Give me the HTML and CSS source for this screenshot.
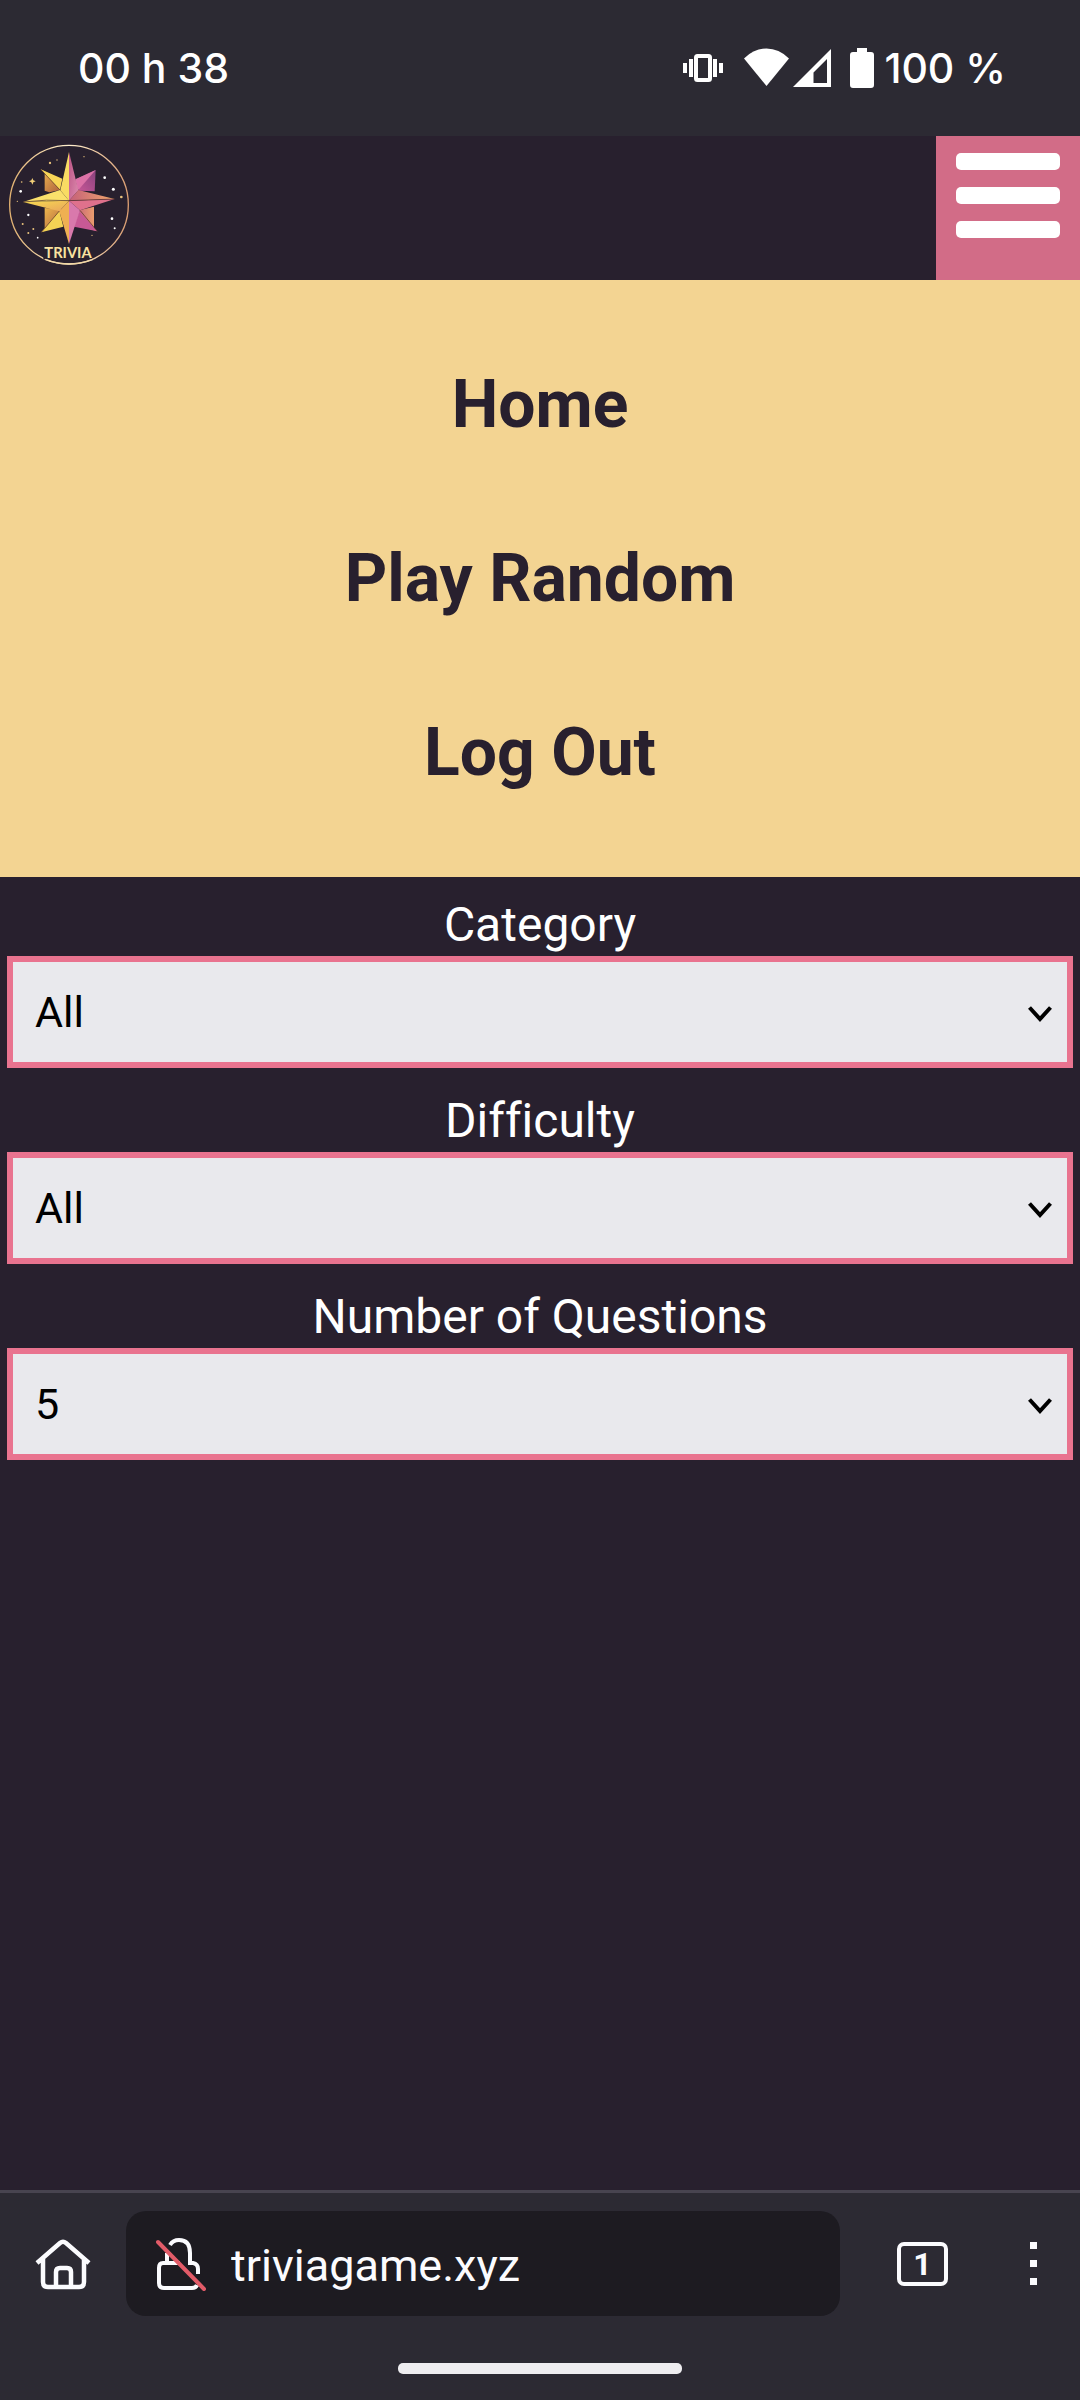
FILE: index.html
```html
<!DOCTYPE html>
<html lang="en">
<head>
<meta charset="utf-8">
<meta name="viewport" content="width=device-width, initial-scale=1">
<title>Trivia</title>
<link rel="stylesheet" href="styles.css">
</head>
<body>
<div class="status">
  <span class="status-text">00 h 38</span>
  <div class="status-icons">
    <svg class="vibrate" width="42" height="40" viewBox="0 0 42 40" fill="#fff" aria-hidden="true">
      <rect x="1" y="15" width="4" height="10"/><rect x="7" y="11" width="4" height="18"/>
      <rect x="31" y="11" width="4" height="18"/><rect x="37" y="15" width="4" height="10"/>
      <rect x="14" y="8" width="14" height="24" rx="1.500" fill="none" stroke="#fff" stroke-width="4"/>
    </svg>
    <svg class="wifi" width="46" height="40" viewBox="0 0 46 40" fill="#fff" aria-hidden="true"><path d="M0 10.500Q10 0.500 22.500 0.500T45 10.500L22.500 38Z"/></svg>
    <svg class="signal" width="38" height="40" viewBox="0 0 38 40" fill="#fff" fill-rule="evenodd" aria-hidden="true"><path d="M0 39L38 1V39ZM20.500 24.500V35H34V11Z"/></svg>
    <svg class="battery" width="24" height="40" viewBox="0 0 24 40" fill="#fff" aria-hidden="true"><path d="M7 0H17V4H21Q24 4 24 7V37Q24 40 21 40H3Q0 40 0 37V7Q0 4 3 4H7Z"/></svg>
    <span class="status-text">100 %</span>
  </div>
</div>

<header class="header">
  <a class="logo" href="#" aria-label="Trivia home">
    <svg width="144" height="144" viewBox="0 18 432 432">
      <defs>
        <linearGradient id="ring" x1="0" y1="0" x2="1" y2="0"><stop offset="0" stop-color="#e0b070"/><stop offset=".5" stop-color="#fff0cf"/><stop offset="1" stop-color="#d99c70"/></linearGradient>
        <linearGradient id="gold" x1="0" y1="0" x2="1" y2="1"><stop offset="0" stop-color="#f8dc50"/><stop offset="1" stop-color="#e8a45c"/></linearGradient>
        <linearGradient id="deep" x1="0" y1="0" x2="1" y2="1"><stop offset="0" stop-color="#f3be4e"/><stop offset="1" stop-color="#ad603f"/></linearGradient>
        <linearGradient id="rose" x1="0" y1="0" x2="1" y2="1"><stop offset="0" stop-color="#bb5385"/><stop offset="1" stop-color="#dd8cae"/></linearGradient>
        <linearGradient id="plum" x1="1" y1="0" x2="0" y2="1"><stop offset="0" stop-color="#87427d"/><stop offset="1" stop-color="#ca5797"/></linearGradient>
        <linearGradient id="peach" x1="0" y1="0" x2="1" y2="0"><stop offset="0" stop-color="#c45f79"/><stop offset="1" stop-color="#f2a86b"/></linearGradient>
      </defs>
      <circle cx="207" cy="224" r="178" fill="none" stroke="url(#ring)" stroke-width="4"/>
      <path d="M122 118L180 148V180L148 187L134 182V128Z" fill="url(#deep)"/>
      <path d="M122 118L187 146L180 180Z" fill="#f8d657"/>
      <path d="M134 234L184 238L176 282L124 307L134 294Z" fill="url(#deep)"/>
      <path d="M124 307L178 243L190 290Z" fill="#f4d354"/>
      <path d="M287 120L228 148L238 182L284 184Z" fill="url(#plum)"/>
      <path d="M287 120L226 148L233 182Z" fill="#dc72a7"/>
      <path d="M240 240L282 230V294L292 304L225 285Z" fill="url(#peach)"/>
      <path d="M292 304L238 243L222 290Z" fill="#c85995"/>
      <path d="M207 66L181 181L207 212Z" fill="#f8dc63"/>
      <path d="M207 66L235 181L207 212Z" fill="url(#rose)"/>
      <path d="M69 216L180 180L207 212Z" fill="#fae06b"/>
      <path d="M69 216L207 212L178 244Z" fill="url(#gold)"/>
      <path d="M344 207L235 180L207 212Z" fill="url(#peach)"/>
      <path d="M344 207L207 212L240 241Z" fill="#df718c"/>
      <path d="M207 342L178 244L207 212Z" fill="#efb052"/>
      <path d="M207 342L240 241L207 212Z" fill="#d979ac"/>
      <path d="M122 118L180 180M124 307L178 243M69 216Q140 207 207 212L344 207M240 241L292 304" fill="none" stroke="#4a2b25" stroke-width="2"/>
      <path d="M97 144L100 151L107 154L100 157L97 164L94 157L87 154L94 151Z" fill="#f2cf78"/>
      <g fill="#e9c27c"><circle cx="150" cy="99" r="3.500"/><circle cx="65" cy="156" r="2.500"/><circle cx="171" cy="90" r="2"/><circle cx="252" cy="80" r="2"/><circle cx="364" cy="201" r="4"/><circle cx="68" cy="282" r="3"/><circle cx="100" cy="297" r="3"/><circle cx="85" cy="309" r="3"/><circle cx="52" cy="214" r="2"/><circle cx="276" cy="316" r="2"/></g>
      <g fill="#fff"><circle cx="62" cy="184" r="4"/><circle cx="85" cy="255" r="3.500"/><circle cx="113" cy="323" r="2.500"/><circle cx="314" cy="143" r="4"/><circle cx="340" cy="178" r="4.500"/><circle cx="336" cy="266" r="4"/><circle cx="344" cy="295" r="3"/></g>
      <path d="M130 347H276V388H130Z" fill="#28202e"/>
      <text class="logo-text" x="204" y="384" text-anchor="middle">TRIVIA</text>
      <path d="M135 388Q207 416 279 388" fill="none" stroke="#f3d8a4" stroke-width="4"/>
    </svg>
  </a>
  <button class="menu-button" type="button" aria-label="Menu" aria-expanded="true"><span class="bar"></span><span class="bar"></span><span class="bar"></span></button>
</header>

<nav class="menu">
  <a href="#">Home</a>
  <a href="#">Play Random</a>
  <a href="#">Log Out</a>
</nav>

<main class="main">
  <form class="form">
    <div class="field">
      <label for="category">Category</label>
      <div class="select">
        <select id="category"><option>All</option></select>
        <svg class="chevron" width="24" height="16" viewBox="0 0 24 16" aria-hidden="true"><path d="M1.500 1.500L12 13L22.500 1.500"/></svg>
      </div>
    </div>
    <div class="field">
      <label for="difficulty">Difficulty</label>
      <div class="select">
        <select id="difficulty"><option>All</option></select>
        <svg class="chevron" width="24" height="16" viewBox="0 0 24 16" aria-hidden="true"><path d="M1.500 1.500L12 13L22.500 1.500"/></svg>
      </div>
    </div>
    <div class="field">
      <label for="count">Number of Questions</label>
      <div class="select">
        <select id="count"><option>5</option></select>
        <svg class="chevron" width="24" height="16" viewBox="0 0 24 16" aria-hidden="true"><path d="M1.500 1.500L12 13L22.500 1.500"/></svg>
      </div>
    </div>
  </form>
</main>

<footer class="browser">
  <div class="toolbar">
    <button class="home" type="button" aria-label="Home page">
      <svg width="56" height="54" viewBox="0 0 56 54" fill="none" stroke="#fbfbfe" stroke-width="4.500" aria-hidden="true"><path d="M2 26L25 6Q28 3.500 31 6L54 26M8 22V45Q8 50 13 50H44Q49 50 49 45V22M21 50V35Q21 31 25 31H32Q36 31 36 35V50"/></svg>
    </button>
    <div class="address">
      <svg width="50" height="54" viewBox="0 0 50 54" fill="none" stroke="#fbfbfe" stroke-width="4" aria-hidden="true"><path d="M14 8Q17 3 23 3Q34 3 34 16V26H37Q42 27 42 32V37M11 16V26H7Q3 26 3 31V46Q3 51 8 51H36Q40 51 41 48M11 26H24"/><path d="M2 5L48 52" stroke="#e25b68" stroke-linecap="round"/></svg>
      <input type="text" value="triviagame.xyz" aria-label="Address">
    </div>
    <button class="tabs" type="button" aria-label="Open tabs">1</button>
    <button class="more" type="button" aria-label="More options"><span></span><span></span><span></span></button>
  </div>
  <div class="handle"></div>
</footer>
</body>
</html>
```
FILE: styles.css
```css
* {
  box-sizing: border-box;
}

body {
  margin: 0;
  min-height: 100vh;
  display: flex;
  flex-direction: column;
  background: #28202e;
  font-family: Roboto, sans-serif;
  font-variant-ligatures: none;
}

button {
  padding: 0;
  border: 0;
  background: none;
  color: #fbfbfe;
  font-family: inherit;
}

svg {
  display: block;
}

/* System status bar */
.status {
  height: 136px;
  padding: 0 74px 0 78px;
  display: flex;
  align-items: center;
  justify-content: space-between;
  background: #2c2a33;
}

.status-icons {
  display: flex;
  align-items: center;
}

.status-text {
  color: #fff;
  font-family: Inter, sans-serif;
  font-size: 41px;
  font-weight: 500;
  line-height: 48px;
}

.vibrate {
  margin-right: 20px;
}

.wifi {
  margin-right: 3px;
}

.signal {
  margin-right: 19px;
}

.battery {
  margin-right: 10px;
}

/* Site header */
.header {
  display: flex;
  justify-content: space-between;
}

.logo-text {
  font: 700 44px Lato, sans-serif;
  fill: #f9e3a0;
}

.menu-button {
  width: 144px;
  height: 144px;
  padding: 17px 20px;
  display: flex;
  flex-direction: column;
  gap: 17px;
  background: #d26c87;
}

.bar {
  width: 100%;
  height: 17px;
  border-radius: 5px;
  background: #fff;
}

.menu {
  padding: 38px 0 37px;
  display: flex;
  flex-direction: column;
  background: #f3d492;
}

.menu a {
  color: #28202e;
  font-size: 66px;
  font-weight: 700;
  line-height: 174px;
  text-align: center;
  text-decoration: none;
}

/* Quiz settings */
.main {
  flex: 1;
}

.form {
  padding: 17px 7px;
  display: flex;
  flex-direction: column;
  gap: 22px;
}

.field {
  display: flex;
  flex-direction: column;
}

.field label {
  color: #fff;
  font-size: 48px;
  line-height: 62px;
  text-align: center;
}

.select {
  display: grid;
  align-items: center;
}

.select select {
  grid-area: 1 / 1;
  width: 100%;
  height: 112px;
  padding: 0 22px;
  appearance: none;
  border: 6px solid #e9738f;
  border-radius: 0;
  background: #e9e9ed;
  color: #000;
  font-family: inherit;
  font-size: 43px;
}

.chevron {
  grid-area: 1 / 1;
  justify-self: end;
  margin: 4px 21px 0 0;
  fill: none;
  stroke: #000;
  stroke-width: 4px;
  pointer-events: none;
}

/* Browser toolbar */
.browser {
  padding: 18px 0 26px;
  display: flex;
  flex-direction: column;
  align-items: center;
  gap: 47px;
  border-top: 3px solid #484450;
  background: #2c2a33;
}

.toolbar {
  width: 100%;
  padding: 0 43px 0 35px;
  display: flex;
  align-items: center;
}

.address {
  flex: 1;
  height: 105px;
  margin: 0 57px 0 35px;
  padding: 0 30px;
  display: flex;
  align-items: center;
  gap: 25px;
  border-radius: 20px;
  background: #1d1b21;
}

.address input {
  flex: 1;
  min-width: 0;
  padding: 3px 0 0;
  border: 0;
  background: none;
  color: #fbfbfe;
  font-family: inherit;
  font-size: 45px;
}

.tabs {
  width: 53px;
  height: 44px;
  border: 4px solid #fbfbfe;
  border-radius: 7px;
  font-size: 32px;
  font-weight: 700;
  line-height: 36px;
}

.more {
  margin-left: 82px;
  display: flex;
  flex-direction: column;
  gap: 11px;
}

.more span {
  width: 7px;
  height: 7px;
  background: #fbfbfe;
}

.handle {
  width: 284px;
  height: 11px;
  border-radius: 5px;
  background: #eeedf0;
}
```
